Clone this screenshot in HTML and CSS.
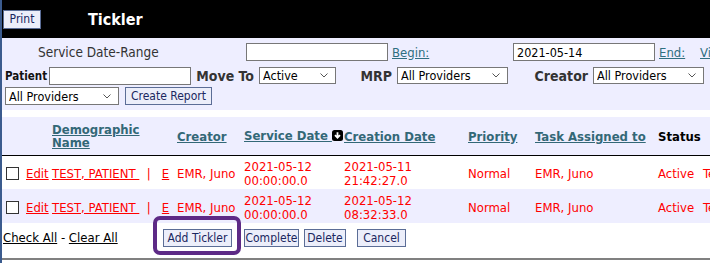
FILE: index.html
```html
<!DOCTYPE html>
<html lang="en">
<head>
    <meta charset="UTF-8">
    <title>Tickler</title>
    <link rel="stylesheet" href="styles.css">
</head>
<body>
    <div class="pagina">
        <div class="topo">
            <button class="btn btnPrint">Print</button>
            <span class="titulo">Tickler</span>
        </div>

        <div class="filtros">
            <div class="linha linha1">
                <span class="rotuloData">Service Date-Range</span>
                <input type="text" class="campo campoData">
                <span class="celulaLink"><a href="#">Begin:</a></span>
                <input type="text" class="campo campoData" value="2021-05-14">
                <span class="celulaLink celulaEnd"><a href="#">End:</a></span>
                <a href="#" class="linkView">View Tickler</a>
            </div>
            <div class="linha linha2">
                <span class="rotuloPatient">Patient</span>
                <input type="text" class="campo campoData">
                <span class="rotulo rotuloMove">Move To</span>
                <select class="lista listaStatus"><option>Active</option></select>
                <span class="rotulo rotuloMrp">MRP</span>
                <select class="lista listaProv"><option>All Providers</option></select>
                <span class="rotulo rotuloCreator">Creator</span>
                <select class="lista listaProv"><option>All Providers</option></select>
            </div>
            <div class="linha linha3">
                <select class="lista listaAssigned"><option>All Providers</option></select>
                <button class="btn btnReport">Create Report</button>
            </div>
        </div>

        <table class="tabela">
            <colgroup>
                <col style="width:22px">
                <col style="width:26px">
                <col style="width:125px">
                <col style="width:67px">
                <col style="width:100px">
                <col style="width:124px">
                <col style="width:67px">
                <col style="width:123px">
                <col style="width:45px">
                <col style="width:60px">
            </colgroup>
            <thead>
                <tr>
                    <th></th>
                    <th></th>
                    <th><a href="#">Demographic<br>Name</a></th>
                    <th><a href="#">Creator</a></th>
                    <th class="semQuebra"><a href="#">Service Date </a><span class="setaOrdem"><svg width="11" height="11" viewBox="0 0 11 11"><rect width="11" height="11" rx="2.5" fill="#000"/><path d="M5.5 2.2v5.2M3 5.2l2.5 2.6 2.5-2.6" stroke="#fff" stroke-width="1.8" fill="none"/></svg></span></th>
                    <th><a href="#">Creation Date</a></th>
                    <th><a href="#">Priority</a></th>
                    <th><a href="#">Task Assigned to</a></th>
                    <th class="preto">Status</th>
                    <th class="ultima"><a href="#" class="amarelo">Message</a></th>
                </tr>
            </thead>
            <tbody>
                <tr class="claro">
                    <td><input type="checkbox" class="marca"></td>
                    <td><a href="#">Edit</a></td>
                    <td class="semQuebra"><a href="#">TEST, PATIENT </a>&nbsp;&nbsp;|&nbsp;&nbsp; <a href="#">E</a></td>
                    <td>EMR, Juno</td>
                    <td>2021-05-12<br>00:00:00.0</td>
                    <td>2021-05-11<br>21:42:27.0</td>
                    <td>Normal</td>
                    <td>EMR, Juno</td>
                    <td>Active</td>
                    <td>Test</td>
                </tr>
                <tr class="lilas">
                    <td><input type="checkbox" class="marca"></td>
                    <td><a href="#">Edit</a></td>
                    <td class="semQuebra"><a href="#">TEST, PATIENT </a>&nbsp;&nbsp;|&nbsp;&nbsp; <a href="#">E</a></td>
                    <td>EMR, Juno</td>
                    <td>2021-05-12<br>00:00:00.0</td>
                    <td>2021-05-12<br>08:32:33.0</td>
                    <td>Normal</td>
                    <td>EMR, Juno</td>
                    <td>Active</td>
                    <td>Test</td>
                </tr>
            </tbody>
        </table>

        <div class="rodape">
            <span class="marcarTodos"><a href="#">Check All</a> - <a href="#">Clear All</a></span>
            <button class="btn btnAdd">Add Tickler</button>
            <button class="btn btnComplete">Complete</button>
            <button class="btn btnDelete">Delete</button>
            <button class="btn btnCancel">Cancel</button>
            <div class="destaque"></div>
        </div>
    </div>
</body>
</html>
```

FILE: styles.css
```css
*{
    padding: 0;
    margin: 0;
    box-sizing: border-box;
}
body {
    font-family: "DejaVu Sans Condensed", "DejaVu Sans", sans-serif;
    font-stretch: condensed;
    background-color: #fff;
}
.pagina {
    width: 710px;
    height: 263px;
    border-left: 2px solid #3b5b8e;
    overflow: hidden;
}
.topo {
    display: flex;
    align-items: center;
    height: 38px;
    background-color: #000;
}
.btn {
    flex-shrink: 0;
    font-family: inherit;
    font-size: 12px;
    height: 18px;
    color: #1a2760;
    background-color: #eceefa;
    border: 1px solid #5b6d96;
    cursor: pointer;
}
.btnPrint {
    width: 38px;
    height: 19px;
    margin-left: 1px;
}
.titulo {
    margin-left: 47px;
    color: #fff;
    font-weight: bold;
    font-size: 16px;
}
.filtros {
    height: 72px;
    background-color: #eeeeff;
}
.linha {
    display: flex;
    align-items: center;
    white-space: nowrap;
}
.linha > * {
    flex-shrink: 0;
}
.linha1 {
    height: 27px;
    padding-top: 1px;
}
.linha2 {
    height: 21px;
}
.linha3 {
    height: 19px;
    padding-top: 1px;
}
.rotuloData {
    width: 244px;
    padding-left: 36px;
    font-size: 13.5px;
    color: #333;
}
.campo {
    height: 18px;
    border: 1px solid #777;
    background-color: #fff;
    font-family: inherit;
    font-size: 12.5px;
    padding: 0 3px;
    outline: none;
}
.campoData {
    width: 142px;
}
.celulaLink {
    width: 125px;
    padding-left: 4px;
    font-size: 13px;
}
.celulaEnd {
    width: 45px;
}
a {
    color: #2f6f80;
}
.linkView {
    font-size: 13px;
}
.rotuloPatient {
    width: 47px;
    padding-left: 3px;
    font-size: 11.5px;
    font-weight: bold;
    color: #111;
}
.rotulo {
    text-align: right;
    padding-right: 5px;
    font-size: 14px;
    font-weight: bold;
    color: #333;
}
.rotuloMove {
    width: 68px;
}
.rotuloMrp {
    width: 61px;
}
.rotuloCreator {
    width: 85px;
}
.lista {
    appearance: none;
    height: 17px;
    border: 1px solid #777;
    background-color: #fff;
    background-image: url("data:image/svg+xml,%3Csvg xmlns='http://www.w3.org/2000/svg' width='8' height='5'%3E%3Cpath d='M0.5 0.5l3.5 3.5 3.5-3.5' stroke='%23555' fill='none'/%3E%3C/svg%3E");
    background-repeat: no-repeat;
    background-position: right 7px center;
    font-family: inherit;
    font-size: 12.5px;
    color: #000;
    padding-left: 3px;
    border-radius: 0;
}
.listaStatus {
    width: 77px;
}
.listaProv {
    width: 111px;
}
.listaAssigned {
    width: 114px;
    height: 18px;
    margin-left: 3px;
}
.btnReport {
    width: 87px;
    margin-left: 6px;
}
.tabela {
    margin-top: 7px;
    border-collapse: collapse;
    table-layout: fixed;
    width: 759px;
    font-size: 13px;
}
.tabela th {
    height: 38px;
    padding-top: 1px;
    background-color: #eeeeff;
    border-bottom: 1px solid #000;
    text-align: left;
    vertical-align: middle;
    padding-left: 2px;
    font-size: 13px;
    line-height: 13px;
}
.tabela th a {
    color: #336877;
}
.tabela .preto {
    color: #000;
}
.tabela .ultima {
    padding-left: 11px;
}
.tabela .amarelo {
    color: #b8a23a;
}
.semQuebra {
    white-space: nowrap;
}
.setaOrdem {
    display: inline-block;
    vertical-align: -1px;
}
.tabela td {
    height: 34px;
    padding-left: 2px;
    padding-top: 3px;
    color: #f00;
    line-height: 14px;
    vertical-align: middle;
}
.tabela td a {
    color: #f00;
}
.lilas td {
    background-color: #eeeeff;
}
.claro td {
    background-color: #fff;
}
.marca {
    appearance: none;
    display: block;
    width: 13px;
    height: 13px;
    margin-left: 2px;
    border: 1px solid #333;
    background-color: #fff;
}
.rodape {
    position: relative;
    display: flex;
    align-items: center;
    height: 37px;
    padding-bottom: 6px;
    border-bottom: 2px solid #808080;
    font-size: 13px;
}
.marcarTodos {
    flex-shrink: 0;
    width: 116px;
    padding-left: 1px;
    white-space: nowrap;
    color: #000;
}
.marcarTodos a {
    color: #000;
}
.btnAdd {
    margin-left: 45px;
    width: 69px;
}
.btnComplete {
    margin-left: 12px;
    width: 55px;
}
.btnDelete {
    margin-left: 5px;
    width: 42px;
}
.btnCancel {
    margin-left: 11px;
    width: 49px;
}
.destaque {
    position: absolute;
    left: 151px;
    top: -7px;
    width: 88px;
    height: 39px;
    border: 4px solid #5d2a86;
    border-radius: 7px;
}
```
